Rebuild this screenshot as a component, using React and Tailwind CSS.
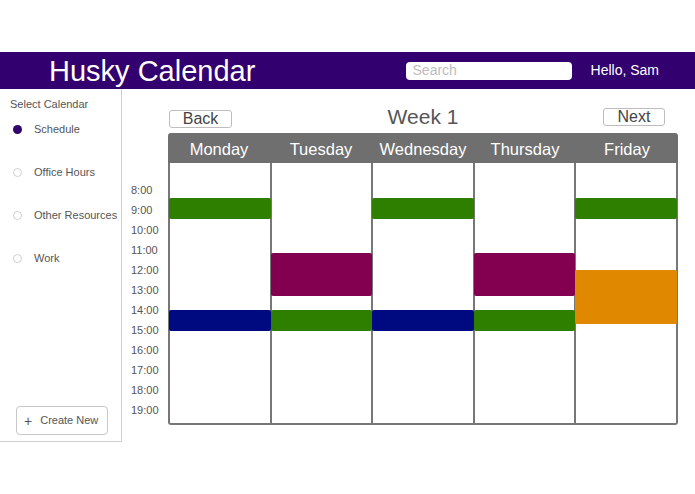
import React from 'react';

const font = { fontFamily: '"Liberation Sans", Arial, sans-serif' };

const calendars = [
  { name: 'Schedule', active: true },
  { name: 'Office Hours' },
  { name: 'Other Resources' },
  { name: 'Work' },
];

const hours = ['8:00', '9:00', '10:00', '11:00', '12:00', '13:00', '14:00', '15:00', '16:00', '17:00', '18:00', '19:00'];

// events per day, top/height in px from the top of the grid body
const days = [
  { name: 'Monday', events: [{ top: 35, h: 21, color: 'bg-[#2e7e00]' }, { top: 147, h: 21, color: 'bg-[#000a80]' }] },
  { name: 'Tuesday', events: [{ top: 90, h: 43, color: 'bg-[#82004f]' }, { top: 147, h: 21, color: 'bg-[#2e7e00]' }] },
  { name: 'Wednesday', events: [{ top: 35, h: 21, color: 'bg-[#2e7e00]' }, { top: 147, h: 21, color: 'bg-[#000a80]' }] },
  { name: 'Thursday', events: [{ top: 90, h: 43, color: 'bg-[#82004f]' }, { top: 147, h: 21, color: 'bg-[#2e7e00]' }] },
  { name: 'Friday', events: [{ top: 35, h: 21, color: 'bg-[#2e7e00]' }, { top: 107, h: 54, color: 'bg-[#e08800]' }] },
];

const Header = () => (
  <div className="h-[37px] bg-[#33006f] flex items-center pl-[49px] pr-[36px]">
    <h1 className="text-white text-[29px] leading-[37px] pt-[1px]">Husky Calendar</h1>
    <input
      className="ml-auto w-[166px] h-[18px] bg-white rounded-[4px] px-[7px] text-[14px] text-[#333] placeholder-[#bdbdbd] outline-none"
      placeholder="Search"
      style={font}
    />
    <span className="ml-[19px] text-white text-[14px]">Hello, Sam</span>
  </div>
);

const Sidebar = () => (
  <div className="w-[122px] h-[353px] border-r border-b border-[#cfcfcf] flex flex-col">
    <div className="pl-[10px] pt-[8px] text-[11px] leading-[14px] text-[#555]">Select Calendar</div>
    <div className="mt-[11px] flex flex-col gap-y-[29px]">
      {calendars.map(c => (
        <div key={c.name} className="flex items-center h-[14px] pl-[13px]">
          {c.active ? (
            <span className="w-[9px] h-[9px] rounded-full bg-[#33006f]" />
          ) : (
            <span className="w-[9px] h-[9px] rounded-full border border-[#cfcfcf] bg-white" />
          )}
          <span className="ml-[12px] text-[11px] text-[#555]">{c.name}</span>
        </div>
      ))}
    </div>
    <button className="mt-auto mb-[6px] ml-[16px] w-[92px] h-[29px] border border-[#c8c8c8] rounded-[4px] flex items-center pl-[7px] text-[11px] text-[#555]" style={font}>
      <span className="text-[14px] leading-none mr-[8px]">+</span>
      Create New
    </button>
  </div>
);

const Week = () => (
  <div className="pl-[9px] pt-[19px]">
    <div className="ml-[37px] w-[510px] h-[22px] grid grid-cols-[1fr_auto_1fr] items-start">
      <button className="mt-[2px] ml-[1px] w-[63px] h-[18px] border border-[#bdbdbd] rounded-[3px] text-[16px] leading-[16px] text-[#444] justify-self-start" style={font}>
        Back
      </button>
      <div className="text-[21px] leading-[18px] text-[#555]">Week 1</div>
      <button className="mr-[13px] w-[62px] h-[18px] border border-[#bdbdbd] rounded-[3px] text-[16px] leading-[16px] text-[#444] justify-self-end" style={font}>
        Next
      </button>
    </div>
    <div className="ml-[37px] mt-[3px] w-[510px] h-[30px] bg-[#6f6f6f] rounded-t-[3px] flex">
      {days.map(d => (
        <div key={d.name} className="flex-1 text-center text-white text-[16.5px] leading-[30px] pt-[1px]">{d.name}</div>
      ))}
    </div>
    <div className="flex">
      <div className="w-[37px] pt-[17px] flex flex-col">
        {hours.map(h => (
          <div key={h} className="h-[20px] text-[11px] leading-[20px] text-[#555]">{h}</div>
        ))}
      </div>
      <div className="w-[510px] h-[262px] flex border-b-2 border-[#777] rounded-b-[3px]">
        {days.map((d, i) => (
          <div key={d.name} className={`relative flex-1 border-l-2 border-[#777] ${i === days.length - 1 ? 'border-r-2' : ''}`}>
            {d.events.map((e, j) => (
              <div
                key={j}
                className={`absolute left-[-1px] right-[-1px] z-10 rounded-[2px] ${e.color}`}
                style={{ top: e.top, height: e.h }}
              />
            ))}
          </div>
        ))}
      </div>
    </div>
  </div>
);

export default function App() {
  return (
    <div className="w-[695px] h-[494px] bg-white overflow-hidden" style={font}>
      <div className="h-[52px]" />
      <Header />
      <div className="flex">
        <Sidebar />
        <Week />
      </div>
    </div>
  );
}
